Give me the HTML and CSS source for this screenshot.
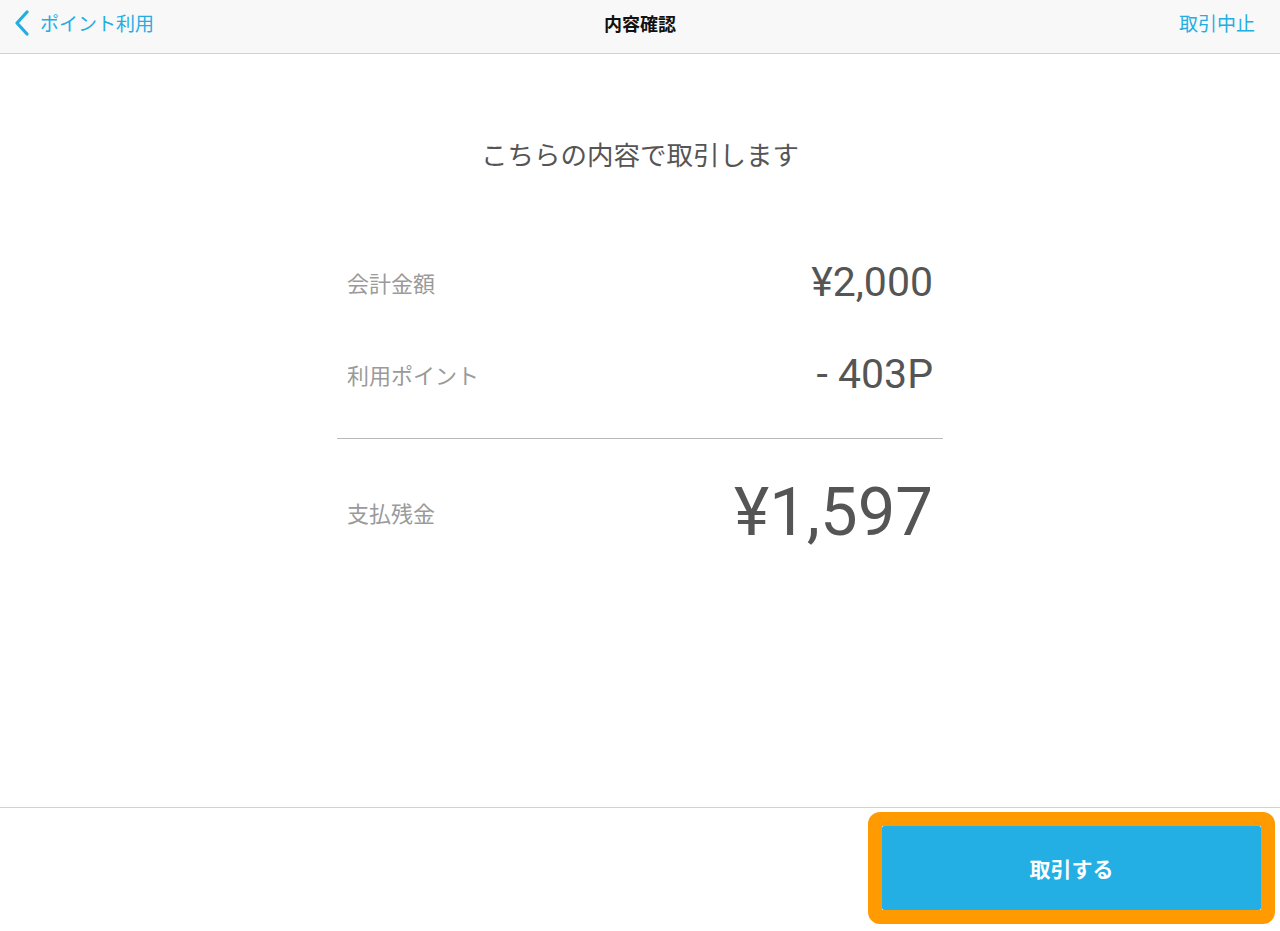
FILE: index.html
```html
<!DOCTYPE html>
<html lang="ja">
<head>
    <meta charset="UTF-8">
    <title>内容確認</title>
    <link rel="stylesheet" href="styles.css">
</head>
<body>
<div class="pantalla">
    <header class="barra">
        <a class="volver" href="#">
            <svg class="chevron" width="18" height="26" viewBox="0 0 18 26">
                <path d="M14 2 L4 13 L14 24" fill="none" stroke="#22aee3" stroke-width="3.2" stroke-linecap="round" stroke-linejoin="round"/>
            </svg>
            <span>ポイント利用</span>
        </a>
        <h1 class="titulo">内容確認</h1>
        <a class="cancelar" href="#">取引中止</a>
    </header>

    <main class="contenido">
        <p class="mensaje">こちらの内容で取引します</p>
        <div class="resumen">
            <div class="fila">
                <span class="etiqueta">会計金額</span>
                <span class="valor">¥2,000</span>
            </div>
            <div class="fila">
                <span class="etiqueta">利用ポイント</span>
                <span class="valor">- 403P</span>
            </div>
            <div class="separador"></div>
            <div class="fila total">
                <span class="etiqueta">支払残金</span>
                <span class="valor">¥1,597</span>
            </div>
        </div>
    </main>

    <footer class="pie">
        <div class="resaltado">
            <button class="boton">取引する</button>
        </div>
    </footer>
</div>
</body>
</html>
```

FILE: styles.css
```css
body {
    margin: 0;
    font-family: "Noto Sans CJK JP", "Noto Sans", sans-serif;
    background: #fff;
}
.pantalla {
    height: 931px;
    display: flex;
    flex-direction: column;
}
.barra {
    height: 54px;
    box-sizing: border-box;
    background: #f8f8f8;
    border-bottom: 1px solid #d2d2d2;
    display: flex;
    align-items: center;
    justify-content: space-between;
    padding: 0 25px 8px 13px;
    position: relative;
}
.volver, .cancelar {
    color: #22aee3;
    text-decoration: none;
    font-size: 19px;
}
.volver {
    display: flex;
    align-items: center;
    gap: 9px;
}
.chevron {
    display: block;
}
.titulo {
    position: absolute;
    left: 0;
    right: 0;
    top: 0;
    bottom: 8px;
    margin: 0;
    display: flex;
    align-items: center;
    justify-content: center;
    font-size: 18px;
    font-weight: bold;
    color: #111;
    pointer-events: none;
}
.contenido {
    flex: 1;
    display: flex;
    flex-direction: column;
    align-items: center;
}
.mensaje {
    margin: 82px 0 0;
    font-size: 26.5px;
    line-height: 36px;
    color: #555;
}
.resumen {
    width: 606px;
    margin-top: 64px;
}
.fila {
    height: 92px;
    display: flex;
    align-items: center;
    justify-content: space-between;
    padding: 0 10px;
}
.etiqueta {
    font-size: 22px;
    color: #9a9a9a;
}
.valor {
    font-family: Roboto, "Noto Sans", sans-serif;
    font-size: 41px;
    color: #555;
}
.separador {
    height: 1px;
    background: #b8b8b8;
    margin-top: 18px;
}
.fila.total {
    height: 120px;
    margin-top: 13px;
}
.total .valor {
    font-size: 67px;
}
.pie {
    height: 124px;
    box-sizing: border-box;
    border-top: 1px solid #d2d2d2;
    display: flex;
    justify-content: flex-end;
    align-items: flex-start;
    padding: 4px 5px 0 0;
}
.resaltado {
    border: 14px solid #ff9b00;
    border-radius: 12px;
    display: flex;
}
.boton {
    width: 379px;
    height: 84px;
    border: none;
    border-radius: 2px;
    background: #23afe3;
    color: #fff;
    font-family: "Noto Sans CJK JP", sans-serif;
    font-size: 21px;
    font-weight: bold;
    cursor: pointer;
}
```
